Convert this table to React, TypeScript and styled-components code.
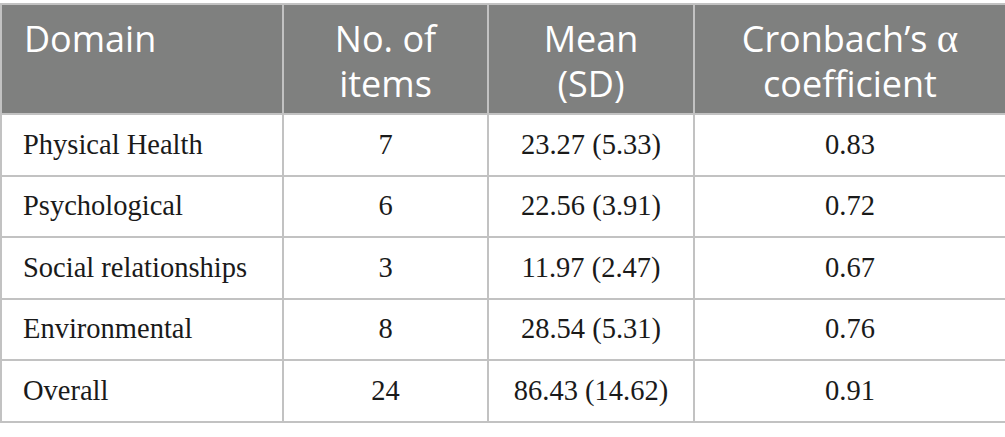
import React from "react";
import styled, { createGlobalStyle } from "styled-components";

const Global = createGlobalStyle`
  html, body { margin: 0; padding: 0; background: #ffffff; }
`;

const Page = styled.div`
  padding-top: 3px;
  width: 1005px;
`;

const Table = styled.table`
  width: 1005px;
  border-collapse: collapse;
  table-layout: fixed;
`;

const HeadCell = styled.th<{ $align?: "left" | "center" }>`
  background: #7f807f;
  color: #ffffff;
  font-family: "Open Sans", "Lato", sans-serif;
  font-weight: 400;
  font-size: 36px;
  line-height: 45px;
  height: 110px;
  box-sizing: border-box;
  padding: 11px 22px 0;
  text-align: ${(p) => p.$align ?? "center"};
  vertical-align: top;
  border: 2px solid #c2c2c2;
`;

const Greek = styled.span`
  font-family: "Liberation Serif", "Times New Roman", serif;
  font-size: 41px;
  line-height: 0;
`;

const Cell = styled.td<{ $align?: "left" | "center" }>`
  font-family: "Liberation Serif", "Times New Roman", serif;
  font-size: 28.5px;
  color: #1a1a1a;
  height: 59.5px;
  padding: 0 21px;
  text-align: ${(p) => p.$align ?? "center"};
  vertical-align: middle;
  border: 2px solid #c2c2c2;
`;

const rows = [
  ["Physical Health", "7", "23.27 (5.33)", "0.83"],
  ["Psychological", "6", "22.56 (3.91)", "0.72"],
  ["Social relationships", "3", "11.97 (2.47)", "0.67"],
  ["Environmental", "8", "28.54 (5.31)", "0.76"],
  ["Overall", "24", "86.43 (14.62)", "0.91"],
];

export default function App() {
  return (
    <Page>
      <Global />
      <Table>
        <colgroup>
          <col style={{ width: 282 }} />
          <col style={{ width: 205 }} />
          <col style={{ width: 206 }} />
          <col style={{ width: 312 }} />
        </colgroup>
        <thead>
          <tr>
            <HeadCell $align="left">Domain</HeadCell>
            <HeadCell>
              No. of
              <br />
              items
            </HeadCell>
            <HeadCell>
              Mean
              <br />
              (SD)
            </HeadCell>
            <HeadCell>
              Cronbach’s <Greek>α</Greek>
              <br />
              coefficient
            </HeadCell>
          </tr>
        </thead>
        <tbody>
          {rows.map((r) => (
            <tr key={r[0]}>
              <Cell $align="left">{r[0]}</Cell>
              <Cell>{r[1]}</Cell>
              <Cell>{r[2]}</Cell>
              <Cell>{r[3]}</Cell>
            </tr>
          ))}
        </tbody>
      </Table>
    </Page>
  );
}
